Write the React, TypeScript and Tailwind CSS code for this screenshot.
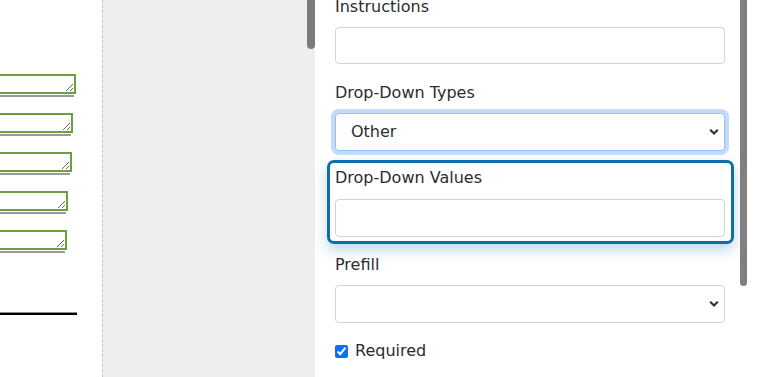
import React from "react";

const Chevron = () => (
  <svg
    className="pointer-events-none absolute right-[5px] top-1/2 -translate-y-1/2"
    width="10"
    height="7"
    viewBox="0 0 10 7"
  >
    <path d="M1.2 1.2 L5 5 L8.8 1.2" fill="none" stroke="#333" strokeWidth="2.2" />
  </svg>
);

const boxes = [76, 73, 72, 68, 67];

export default function App() {
  return (
    <div
      className="flex h-[377px] w-[768px] overflow-hidden bg-white text-[#2a2d31]"
      style={{ fontFamily: '"DejaVu Sans", sans-serif' }}
    >
      {/* left canvas */}
      <div className="flex w-[102px] shrink-0 flex-col overflow-hidden pt-[74px]">
        <div className="flex flex-col gap-[16px]">
          {boxes.map((r, i) => (
            <div key={i} className="flex flex-col">
              <textarea
                className="-ml-[20px] block h-[20px] min-h-0 resize border-2 border-[#6aa13d] bg-white outline-none"
                style={{ width: r + 20 }}
              />
              <div className="mt-[1px] h-[2px] bg-[#9a9a9a]" style={{ width: r - 2 }} />
            </div>
          ))}
        </div>
        <div className="mt-[59px] w-[77px]">
          <div className="h-[1px] bg-[#8a8a8a]" />
          <div className="h-[2px] bg-black" />
        </div>
      </div>

      {/* middle gray */}
      <div className="flex w-[213px] shrink-0 justify-end border-l border-dashed border-[#c4c4c4] bg-[#eeeeee]">
        <div className="h-[49px] w-[8px] rounded-b-[4px] bg-[#7b7b7b]" />
      </div>

      {/* right form */}
      <div className="flex flex-1 bg-white">
        <div className="ml-[20px] -mt-[5px] flex w-[390px] flex-col text-[16px] leading-[24px]">
          <div>Instructions</div>
          <div className="mt-[8px] h-[37px] rounded-[4px] border border-[#ced4da] bg-white" />

          <div className="mt-[17px]">Drop-Down Types</div>
          <div className="relative mt-[8px] flex h-[38px] items-center rounded-[4px] border border-[#95bffb] bg-white pl-[15px] shadow-[0_0_0_4px_#c2dbfb]">
            <span>Other</span>
            <Chevron />
          </div>

          <div className="-ml-[8px] -mr-[9px] mt-[9px] flex flex-col rounded-[7px] border-[3px] border-[#0f6eaa] bg-white pb-[4px] pl-[5px] pr-[6px] pt-[3px] shadow-[0_6px_14px_rgba(15,110,170,0.28)]">
            <div>Drop-Down Values</div>
            <div className="mt-[9px] h-[38px] rounded-[4px] border border-[#ced4da] bg-white" />
          </div>

          <div className="mt-[9px]">Prefill</div>
          <div className="relative mt-[8px] h-[38px] rounded-[4px] border border-[#ced4da] bg-white">
            <Chevron />
          </div>

          <label className="mt-[16px] flex items-center gap-[7px]">
            <input type="checkbox" defaultChecked className="m-0 h-[13px] w-[13px] accent-[#0d6efd]" />
            <span>Required</span>
          </label>
        </div>
        <div className="ml-[15px] h-[286px] w-[7px] rounded-b-full bg-[#808080]" />
      </div>
    </div>
  );
}
